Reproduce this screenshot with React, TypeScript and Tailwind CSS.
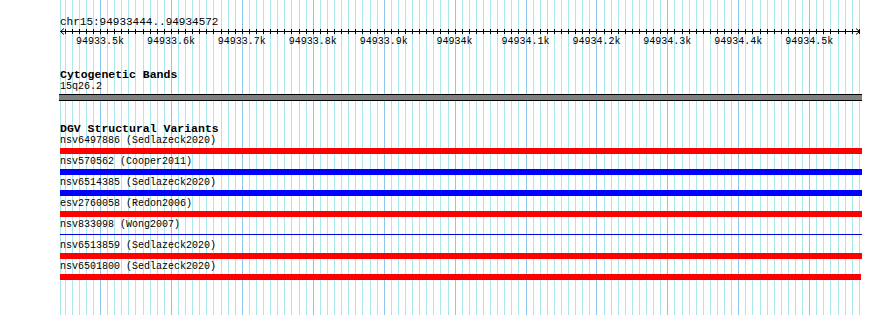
const START = 94933444;
const END = 94934572;
const PX_PER_BP = 0.70922;
const ORIGIN = 100; // screen x of 94933500

const bpToX = (bp: number) => ORIGIN + (bp - 94933500) * PX_PER_BP;

const GRID: { x: number; major: boolean }[] = [{ x: 60, major: false }];
for (let bp = 94933450; bp <= 94934570; bp += 10) {
  GRID.push({ x: bpToX(bp), major: bp % 100 === 0 });
}

const TICK_LABELS: { bp: number; label: string }[] = [];
for (let bp = 94933500; bp <= 94934500; bp += 100) {
  TICK_LABELS.push({ bp, label: (bp / 1000).toString() + "k" });
}

const VARIANTS = [
  { name: "nsv6497886 (Sedlazeck2020)", kind: "loss", end: 862 },
  { name: "nsv570562 (Cooper2011)", kind: "gain", end: 862 },
  { name: "nsv6514385 (Sedlazeck2020)", kind: "gain", end: 862 },
  { name: "esv2760058 (Redon2006)", kind: "loss", end: 862 },
  { name: "nsv833098 (Wong2007)", kind: "line", end: 862 },
  { name: "nsv6513859 (Sedlazeck2020)", kind: "loss", end: 862 },
  { name: "nsv6501800 (Sedlazeck2020)", kind: "loss", end: 861 },
];

const mono = { fontFamily: '"Liberation Mono", "DejaVu Sans Mono", monospace' };

function Grid() {
  return (
    <svg className="absolute inset-0" width={890} height={315}>
      {GRID.map((g, i) => {
        const x = Math.round(g.x) + 0.5;
        return (
          <line
            key={i}
            x1={x}
            x2={x}
            y1={0}
            y2={315}
            stroke={g.major ? "#8cc8ee" : "#aae8ee"}
            strokeWidth={1}
          />
        );
      })}
    </svg>
  );
}

function Ruler() {
  return (
    <div className="flex flex-col">
      <div className="h-[12px] pt-[16px] box-content text-[11px] leading-[12px] text-black">
        chr15:{START}..{END}
      </div>
      <svg width={802} height={9} className="-ml-px mt-[-1px]">
        <line x1={1} x2={801} y1={4.5} y2={4.5} stroke="#000" strokeWidth={1} />
        <polyline points="5,1.5 1.5,4.5 5,7.5" fill="none" stroke="#000" strokeWidth={1} />
        <polyline points="797,1.5 800.5,4.5 797,7.5" fill="none" stroke="#000" strokeWidth={1} />
        {GRID.slice(1).map((g, i) => {
          const x = Math.round(g.x) + 0.5 - 59;
          return <line key={i} x1={x} x2={x} y1={2} y2={7} stroke="#000" strokeWidth={1} />;
        })}
      </svg>
      <div className="relative h-[11px] text-[10px] leading-[11px]">
        {TICK_LABELS.map((t) => (
          <span
            key={t.bp}
            className="absolute top-0 -translate-x-1/2 whitespace-nowrap"
            style={{ left: bpToX(t.bp) - 60 }}
          >
            {t.label}
          </span>
        ))}
      </div>
    </div>
  );
}

function VariantRow({ name, kind, end }: { name: string; kind: string; end: number }) {
  return (
    <div className="flex flex-col pb-[2px]">
      <div className="h-[12px] text-[10px] leading-[12px] whitespace-nowrap">{name}</div>
      <div className="mt-px h-[6px] flex flex-col" style={{ width: end - 60 }}>
        {kind === "line" ? (
          <div className="mt-[2px] h-px bg-[#0000dd]" />
        ) : (
          <div className={`h-[6px] ${kind === "loss" ? "bg-[#ff0000]" : "bg-[#0000ff]"}`} />
        )}
      </div>
    </div>
  );
}

export default function App() {
  return (
    <div className="relative w-[890px] h-[315px] bg-white overflow-hidden text-black" style={mono}>
      <Grid />
      <div className="relative pl-[60px] w-[862px] flex flex-col">
        <Ruler />

        <div className="mt-[22px] h-[12px] text-[11.5px] leading-[12px] font-bold">Cytogenetic Bands</div>
        <div className="h-[12px] text-[10px] leading-[12px]">15q26.2</div>
        <div className="mt-px -ml-px h-[7px] border-y border-black bg-[#808080]" />

        <div className="mt-[22px] h-[12px] text-[11.5px] leading-[12px] font-bold">DGV Structural Variants</div>
        {VARIANTS.map((v) => (
          <VariantRow key={v.name} {...v} />
        ))}
      </div>
    </div>
  );
}
